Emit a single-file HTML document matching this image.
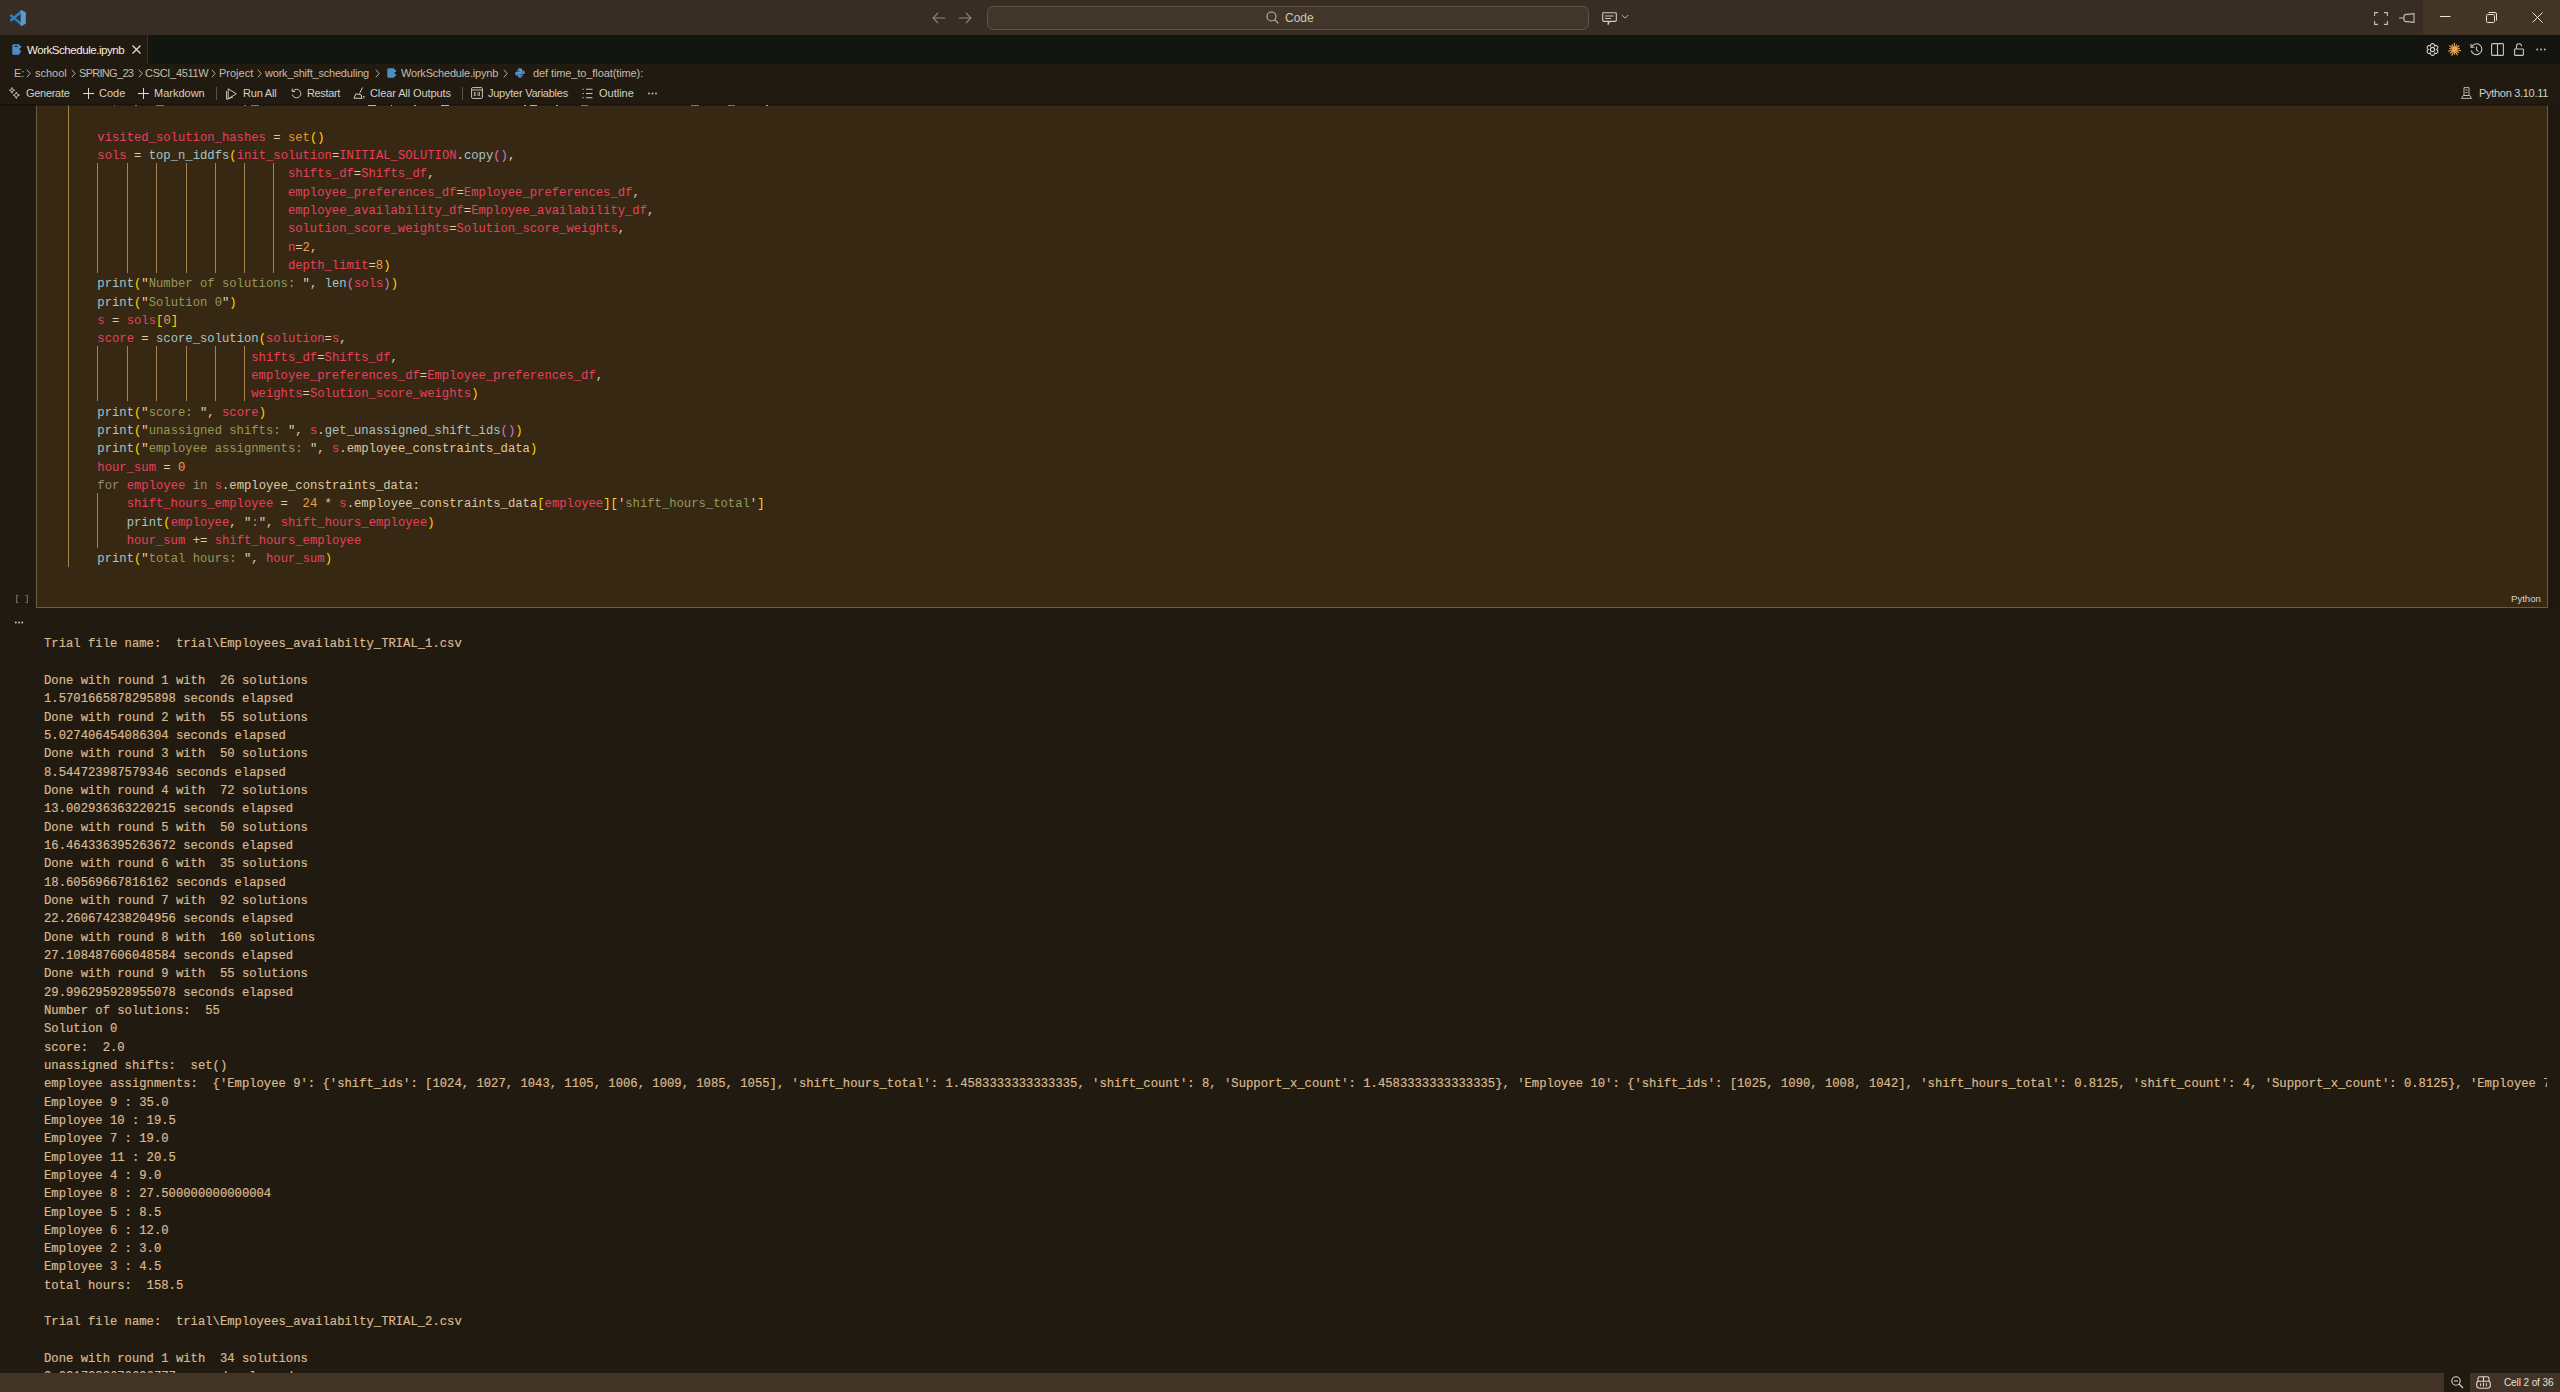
<!DOCTYPE html>
<html><head><meta charset="utf-8">
<style>
*{box-sizing:border-box}
html,body{margin:0;padding:0}
body{width:2560px;height:1392px;overflow:hidden;position:relative;background:#211a11;font-family:"Liberation Sans",sans-serif;color:#d3cab9}
.abs{position:absolute}
svg{position:absolute;overflow:visible}
#title{left:0;top:0;width:2560px;height:35px;background:#372d24}
#winctl{left:2423px;top:0;width:137px;height:35px;background:#433526}
#search{left:987px;top:6px;width:602px;height:24px;background:#413629;border:1px solid #625240;border-radius:6px}
#tabbar{left:0;top:35px;width:2560px;height:29px;background:#131510}
#tab{left:0;top:35px;width:148px;height:29px;background:#211a11;border-right:1px solid #3a2e22}
.ui{position:absolute;white-space:pre;font-size:11px;line-height:14px}
#cell{left:36px;top:104px;width:2512px;height:504px;background:#372813;border:1px solid #6b5c48;border-top:none}
#shadow{left:0;top:104px;width:2548px;height:2px;background:linear-gradient(#15100a,rgba(21,16,10,0.45))}
#scroll{left:2548px;top:104px;width:12px;height:504px;background:#1f1810}
.mono{font-family:"Liberation Mono",monospace;font-size:12.21px;line-height:18.333px;letter-spacing:0.006px}
.mono .ln{white-space:pre;height:18.333px}
#code{left:68px;top:92.17px}
#code .ln{height:18.333px}
#out{left:44px;top:617px;width:2503px;overflow:hidden;color:#d8b98e;-webkit-text-stroke:0.2px #d8b98e}
#out .ln{height:18.333px}
.guide{position:absolute;width:1px;background:#a6834e}
#status{left:0;top:1373px;width:2560px;height:19px;background:#413325}
</style></head><body>
<!-- title bar -->
<div id="title" class="abs"></div>
<div id="winctl" class="abs"></div>
<svg style="left:10px;top:10px" width="16" height="16" viewBox="0 0 16 16"><path d="M1.1 5.6 L11.8 14.6 M1.1 10.2 L11.8 1.2" stroke="#2f80c2" stroke-width="2.5" stroke-linecap="round"/><path d="M10.6 0.4 Q11.4 -0.1 12.2 0.4 L15.2 1.9 Q15.9 2.3 15.9 3 V13 Q15.9 13.7 15.2 14.1 L12.2 15.6 Q11.4 16.1 10.6 15.6 Z" fill="#5b9ac6"/></svg>
<svg style="left:932px;top:12px" width="14" height="12" viewBox="0 0 14 12"><path d="M6 1 L1 6 L6 11 M1 6 H13" stroke="#8f8575" stroke-width="1.1" fill="none"/></svg>
<svg style="left:958px;top:12px" width="14" height="12" viewBox="0 0 14 12"><path d="M8 1 L13 6 L8 11 M1 6 H13" stroke="#8f8575" stroke-width="1.1" fill="none"/></svg>
<div id="search" class="abs"></div>
<svg style="left:1266px;top:11px" width="13" height="13" viewBox="0 0 13 13"><circle cx="5.5" cy="5.5" r="4.5" stroke="#bcbcb4" stroke-width="1.1" fill="none"/><path d="M8.8 8.8 L12.3 12.3" stroke="#bcbcb4" stroke-width="1.2"/></svg>
<div class="ui" style="left:1285px;top:10px;font-size:12px;line-height:16px;color:#d0c8b8">Code</div>
<svg style="left:1602px;top:12px" width="15" height="14" viewBox="0 0 15 14"><path d="M1.5 0.8 H13.5 Q14.3 0.8 14.3 1.6 V8.6 Q14.3 9.4 13.5 9.4 H7.5 L6 12.8 L6.3 9.4 H1.5 Q0.7 9.4 0.7 8.6 V1.6 Q0.7 0.8 1.5 0.8 Z" stroke="#cfcabc" stroke-width="1.1" fill="none"/><path d="M3 4 H11.5 M3 6.5 H9" stroke="#cfcabc" stroke-width="1.1"/></svg>
<svg style="left:1621px;top:14px" width="8" height="6" viewBox="0 0 8 6"><path d="M0.8 1 L4 4.2 L7.2 1" stroke="#c0bab0" stroke-width="1" fill="none"/></svg>
<!-- layout icons -->
<svg style="left:2374px;top:12px" width="14" height="13" viewBox="0 0 14 13"><path d="M0.6 4 V0.6 H4 M10 0.6 H13.4 V4 M13.4 9 V12.4 H10 M4 12.4 H0.6 V9" stroke="#c8c0b2" stroke-width="1.1" fill="none"/></svg>
<svg style="left:2399px;top:13px" width="16" height="10" viewBox="0 0 16 10"><path d="M0 5 H5 M5 3 V7 L6 8.4 L15 9.4 V0.6 L6 1.6 Z" stroke="#c8c0b2" stroke-width="1.1" fill="none"/></svg>
<svg style="left:2440px;top:15px" width="11" height="3" viewBox="0 0 11 3"><path d="M0 1.5 H10.5" stroke="#e8e2d8" stroke-width="1"/></svg>
<svg style="left:2486px;top:12px" width="11" height="11" viewBox="0 0 11 11"><rect x="0.5" y="2.5" width="8" height="8" rx="1" stroke="#e8e2d8" stroke-width="1" fill="none"/><path d="M2.5 0.5 H9 Q10.5 0.5 10.5 2 V8.5" stroke="#e8e2d8" stroke-width="1" fill="none"/></svg>
<svg style="left:2532px;top:12px" width="11" height="11" viewBox="0 0 11 11"><path d="M0.5 0.5 L10.5 10.5 M10.5 0.5 L0.5 10.5" stroke="#e8e2d8" stroke-width="1"/></svg>

<!-- tab bar -->
<div id="tabbar" class="abs"></div>
<div id="tab" class="abs"></div>
<svg style="left:12px;top:44px" width="9" height="11" viewBox="0 0 9 11"><rect x="0.3" y="0.3" width="7.4" height="10.4" rx="1.2" fill="#4b8dc6"/><rect x="7" y="2" width="2" height="2" fill="#4b8dc6"/><rect x="7" y="6.5" width="2" height="2" fill="#4b8dc6"/><rect x="2.5" y="1.8" width="3" height="1.2" fill="#1d2a33"/></svg>
<div class="ui" style="left:27px;top:43px;font-size:11.5px;color:#f2ede4;letter-spacing:-0.45px">WorkSchedule.ipynb</div>
<svg style="left:132px;top:45px" width="9" height="9" viewBox="0 0 9 9"><path d="M0.5 0.5 L8.5 8.5 M8.5 0.5 L0.5 8.5" stroke="#eee8dc" stroke-width="1.1"/></svg>
<!-- editor actions -->
<svg style="left:2426px;top:43px" width="13" height="13" viewBox="0 0 13 13"><circle cx="6.5" cy="6.5" r="2.1" stroke="#d8d2c4" stroke-width="1.1" fill="none"/><path d="M10.60 6.50 L11.00 6.74 L11.28 7.00 L11.49 7.29 L11.66 7.60 L11.78 7.91 L11.84 8.24 L11.86 8.56 L11.83 8.87 L11.74 9.17 L11.61 9.45 L11.43 9.70 L11.22 9.93 L10.96 10.11 L10.68 10.26 L10.36 10.36 L10.03 10.42 L9.68 10.43 L9.32 10.39 L8.96 10.28 L8.55 10.05 L8.55 10.52 L8.45 10.89 L8.31 11.22 L8.13 11.52 L7.91 11.78 L7.67 12.00 L7.40 12.17 L7.11 12.30 L6.81 12.37 L6.50 12.40 L6.19 12.37 L5.89 12.30 L5.60 12.17 L5.33 12.00 L5.09 11.78 L4.87 11.52 L4.69 11.22 L4.55 10.89 L4.45 10.52 L4.45 10.05 L4.04 10.28 L3.68 10.39 L3.32 10.43 L2.97 10.42 L2.64 10.36 L2.32 10.26 L2.04 10.11 L1.78 9.93 L1.57 9.70 L1.39 9.45 L1.26 9.17 L1.17 8.87 L1.14 8.56 L1.16 8.24 L1.22 7.91 L1.34 7.60 L1.51 7.29 L1.72 7.00 L2.00 6.74 L2.40 6.50 L2.00 6.26 L1.72 6.00 L1.51 5.71 L1.34 5.40 L1.22 5.09 L1.16 4.76 L1.14 4.44 L1.17 4.13 L1.26 3.83 L1.39 3.55 L1.57 3.30 L1.78 3.07 L2.04 2.89 L2.32 2.74 L2.64 2.64 L2.97 2.58 L3.32 2.57 L3.68 2.61 L4.04 2.72 L4.45 2.95 L4.45 2.48 L4.55 2.11 L4.69 1.78 L4.87 1.48 L5.09 1.22 L5.33 1.00 L5.60 0.83 L5.89 0.70 L6.19 0.63 L6.50 0.60 L6.81 0.63 L7.11 0.70 L7.40 0.83 L7.67 1.00 L7.91 1.22 L8.13 1.48 L8.31 1.78 L8.45 2.11 L8.55 2.48 L8.55 2.95 L8.96 2.72 L9.32 2.61 L9.68 2.57 L10.03 2.58 L10.36 2.64 L10.68 2.74 L10.96 2.89 L11.22 3.07 L11.43 3.30 L11.61 3.55 L11.74 3.83 L11.83 4.13 L11.86 4.44 L11.84 4.76 L11.78 5.09 L11.66 5.40 L11.49 5.71 L11.28 6.00 L11.00 6.26 L10.60 6.50 Z" stroke="#d8d2c4" stroke-width="1.1" fill="none"/></svg>
<svg style="left:2448px;top:43px" width="13" height="13" viewBox="0 0 13 13"><path d="M6.5 6.5 L12.67 7.75 M6.5 6.5 L10.64 9.64 M6.5 6.5 L9.23 11.84 M6.5 6.5 L6.62 11.30 M6.5 6.5 L3.86 12.33 M6.5 6.5 L2.28 10.03 M6.5 6.5 L0.49 8.03 M6.5 6.5 L1.70 5.53 M6.5 6.5 L1.64 2.81 M6.5 6.5 L4.08 1.78 M6.5 6.5 L6.35 0.20 M6.5 6.5 L8.56 1.94 M6.5 6.5 L10.95 2.77 M6.5 6.5 L11.44 5.24" stroke="#e3a655" stroke-width="1.15" stroke-linecap="round"/><circle cx="6.5" cy="6.5" r="1.2" fill="#e3a655"/></svg>
<svg style="left:2470px;top:43px" width="13" height="13" viewBox="0 0 13 13"><path d="M1.5 4 A5.4 5.4 0 1 1 1.2 7.5" stroke="#cdc6b8" stroke-width="1.1" fill="none"/><path d="M1 1 V4.3 H4.3" stroke="#cdc6b8" stroke-width="1.1" fill="none"/><path d="M6.5 3.5 V6.8 L8.6 8.6" stroke="#cdc6b8" stroke-width="1.1" fill="none"/></svg>
<svg style="left:2491px;top:43px" width="13" height="13" viewBox="0 0 13 13"><rect x="0.6" y="0.6" width="11.8" height="11.8" rx="1" stroke="#cdc6b8" stroke-width="1.1" fill="none"/><path d="M6.5 0.6 V12.4" stroke="#cdc6b8" stroke-width="1.1"/></svg>
<svg style="left:2514px;top:43px" width="10" height="13" viewBox="0 0 10 13"><rect x="0.6" y="6" width="8.8" height="6.4" rx="0.6" stroke="#cdc6b8" stroke-width="1.1" fill="none"/><path d="M2.5 6 V3.2 A2.5 2.5 0 0 1 7.5 3.2" stroke="#cdc6b8" stroke-width="1.1" fill="none"/></svg>
<svg style="left:2536px;top:48px" width="10" height="3" viewBox="0 0 10 3"><circle cx="1.2" cy="1.5" r="0.9" fill="#cdc6b8"/><circle cx="5" cy="1.5" r="0.9" fill="#cdc6b8"/><circle cx="8.8" cy="1.5" r="0.9" fill="#cdc6b8"/></svg>

<!-- breadcrumbs -->
<div class="ui" style="left:14px;top:66px;color:#c6bcaa">E:</div>
<div class="ui" style="left:35px;top:66px;color:#c6bcaa">school</div>
<div class="ui" style="left:79px;top:66px;color:#c6bcaa;letter-spacing:-0.7px">SPRING_23</div>
<div class="ui" style="left:145px;top:66px;color:#c6bcaa;letter-spacing:-0.3px">CSCI_4511W</div>
<div class="ui" style="left:219px;top:66px;color:#c6bcaa">Project</div>
<div class="ui" style="left:265px;top:66px;color:#c6bcaa;letter-spacing:-0.2px">work_shift_scheduling</div>
<div class="ui" style="left:401px;top:66px;color:#c6bcaa;letter-spacing:-0.2px">WorkSchedule.ipynb</div>
<div class="ui" style="left:533px;top:66px;color:#c6bcaa;letter-spacing:-0.1px">def time_to_float(time):</div>
<svg style="left:0;top:0" width="1" height="1"></svg>
<svg style="left:26px;top:69px" width="5" height="9" viewBox="0 0 5 9"><path d="M0.8 0.8 L4.2 4.5 L0.8 8.2" stroke="#b8ae9c" stroke-width="1" fill="none"/></svg>
<svg style="left:71px;top:69px" width="5" height="9" viewBox="0 0 5 9"><path d="M0.8 0.8 L4.2 4.5 L0.8 8.2" stroke="#b8ae9c" stroke-width="1" fill="none"/></svg>
<svg style="left:138px;top:69px" width="5" height="9" viewBox="0 0 5 9"><path d="M0.8 0.8 L4.2 4.5 L0.8 8.2" stroke="#b8ae9c" stroke-width="1" fill="none"/></svg>
<svg style="left:211px;top:69px" width="5" height="9" viewBox="0 0 5 9"><path d="M0.8 0.8 L4.2 4.5 L0.8 8.2" stroke="#b8ae9c" stroke-width="1" fill="none"/></svg>
<svg style="left:257px;top:69px" width="5" height="9" viewBox="0 0 5 9"><path d="M0.8 0.8 L4.2 4.5 L0.8 8.2" stroke="#b8ae9c" stroke-width="1" fill="none"/></svg>
<svg style="left:375px;top:69px" width="5" height="9" viewBox="0 0 5 9"><path d="M0.8 0.8 L4.2 4.5 L0.8 8.2" stroke="#b8ae9c" stroke-width="1" fill="none"/></svg>
<svg style="left:503px;top:69px" width="5" height="9" viewBox="0 0 5 9"><path d="M0.8 0.8 L4.2 4.5 L0.8 8.2" stroke="#b8ae9c" stroke-width="1" fill="none"/></svg>
<svg style="left:387px;top:68px" width="9" height="10" viewBox="0 0 9 10"><rect x="0.3" y="0.3" width="7.4" height="9.4" rx="1.2" fill="#4b8dc6"/><rect x="7" y="2" width="2" height="2" fill="#4b8dc6"/><rect x="7" y="6" width="2" height="2" fill="#4b8dc6"/></svg>
<svg style="left:515px;top:68px" width="10" height="10" viewBox="0 0 10 10"><path d="M4.8 0.3 Q2.4 0.3 2.4 2 V3.2 H5.2 V3.7 H1.6 Q0.2 3.7 0.2 5.6 Q0.2 7.6 1.6 7.6 H2.4 V6.2 Q2.4 5 3.7 5 H6.2 Q7.4 5 7.4 3.8 V2 Q7.4 0.3 4.8 0.3 Z" fill="#5b9bd1"/><path d="M5.2 9.7 Q7.6 9.7 7.6 8 V6.8 H4.8 V6.3 H8.4 Q9.8 6.3 9.8 4.4 Q9.8 2.4 8.4 2.4 H7.6 V3.8 Q7.6 5 6.3 5 H3.8 Q2.6 5 2.6 6.2 V8 Q2.6 9.7 5.2 9.7 Z" fill="#4d8cc6"/><circle cx="3.6" cy="1.5" r="0.5" fill="#1e1912"/><circle cx="6.4" cy="8.5" r="0.5" fill="#1e1912"/></svg>

<!-- notebook toolbar -->
<svg style="left:9px;top:87px" width="11" height="12" viewBox="0 0 11 12"><path d="M3 0.5 L3.8 2.6 L5.8 3.3 L3.8 4 L3 6.2 L2.2 4 L0.3 3.3 L2.2 2.6 Z" stroke="#cdc6b8" stroke-width="0.9" fill="none"/><path d="M7.3 5 L8.2 7.3 L10.5 8.2 L8.2 9.1 L7.3 11.5 L6.4 9.1 L4.1 8.2 L6.4 7.3 Z" stroke="#cdc6b8" stroke-width="0.9" fill="none"/></svg>
<div class="ui" style="left:26px;top:86px;color:#d6cfc2;letter-spacing:-0.3px">Generate</div>
<svg style="left:83px;top:88px" width="11" height="11" viewBox="0 0 11 11"><path d="M5.5 0 V11 M0 5.5 H11" stroke="#e0d9cc" stroke-width="1"/></svg>
<div class="ui" style="left:99px;top:86px;color:#d6cfc2">Code</div>
<svg style="left:138px;top:88px" width="11" height="11" viewBox="0 0 11 11"><path d="M5.5 0 V11 M0 5.5 H11" stroke="#e0d9cc" stroke-width="1"/></svg>
<div class="ui" style="left:154px;top:86px;color:#d6cfc2">Markdown</div>
<div class="abs" style="left:216px;top:87px;width:1px;height:13px;background:#5c5245"></div>
<svg style="left:226px;top:88px" width="11" height="12" viewBox="0 0 11 12"><path d="M2.2 0.8 L10.3 5.8 L2.2 10.8 Z" stroke="#cdc6b8" stroke-width="1" fill="none" stroke-linejoin="round"/><path d="M0.6 3 V11.4 L7 9" stroke="#cdc6b8" stroke-width="1" fill="none"/></svg>
<div class="ui" style="left:243px;top:86px;color:#d6cfc2;letter-spacing:-0.2px">Run All</div>
<svg style="left:291px;top:88px" width="11" height="11" viewBox="0 0 11 11"><path d="M2.2 2.8 A4.3 4.3 0 1 1 1.3 6.5" stroke="#cdc6b8" stroke-width="1" fill="none"/><path d="M1.2 0.6 V3.5 H4.1" stroke="#cdc6b8" stroke-width="1" fill="none"/></svg>
<div class="ui" style="left:307px;top:86px;color:#d6cfc2;letter-spacing:-0.35px">Restart</div>
<svg style="left:353px;top:87px" width="12" height="12" viewBox="0 0 12 12"><path d="M9.5 0.5 L6.5 6.5 M1 11.3 H9.5 M1 11.3 L2.8 6.8 L8.2 7.8 L8.8 11.3" stroke="#cdc6b8" stroke-width="1" fill="none"/><path d="M10 9.5 H11.5 M10.5 11 H11.5" stroke="#cdc6b8" stroke-width="1"/></svg>
<div class="ui" style="left:370px;top:86px;color:#d6cfc2;letter-spacing:-0.1px">Clear All Outputs</div>
<div class="abs" style="left:462px;top:87px;width:1px;height:13px;background:#5c5245"></div>
<svg style="left:471px;top:87px" width="12" height="12" viewBox="0 0 12 12"><rect x="0.6" y="0.6" width="10.8" height="10.8" rx="1" stroke="#cdc6b8" stroke-width="1" fill="none"/><path d="M0.6 3 H11.4" stroke="#cdc6b8" stroke-width="1"/><path d="M3 5 L4.5 9 M4.5 5 L3 9 M7 5 V9 M8.5 5 V9" stroke="#cdc6b8" stroke-width="0.8"/></svg>
<div class="ui" style="left:488px;top:86px;color:#d6cfc2;letter-spacing:-0.25px">Jupyter Variables</div>
<svg style="left:582px;top:88px" width="11" height="11" viewBox="0 0 11 11"><path d="M0.5 1.2 H1.8 M0.5 5.5 H1.8 M0.5 9.8 H1.8 M4 1.2 H10.5 M4 5.5 H10.5 M4 9.8 H10.5" stroke="#cdc6b8" stroke-width="1.1"/></svg>
<div class="ui" style="left:599px;top:86px;color:#d6cfc2">Outline</div>
<svg style="left:648px;top:92px" width="9" height="3" viewBox="0 0 9 3"><circle cx="1" cy="1.5" r="0.9" fill="#cdc6b8"/><circle cx="4.5" cy="1.5" r="0.9" fill="#cdc6b8"/><circle cx="8" cy="1.5" r="0.9" fill="#cdc6b8"/></svg>
<svg style="left:2461px;top:87px" width="11" height="12" viewBox="0 0 11 12"><path d="M3 0.6 H8 V8.5 H3 Z M0.5 11.4 L2.2 8.5 H8.8 L10.5 11.4 Z M4.5 3 H6.5 M4.5 5.5 H6.5" stroke="#cdc6b8" stroke-width="0.9" fill="none"/></svg>
<div class="ui" style="left:2479px;top:86px;color:#d6cfc2;letter-spacing:-0.3px">Python 3.10.11</div>

<!-- cell -->
<div id="cell" class="abs"></div>
<div id="code" class="abs mono">
<div class="ln"></div>
<div class="ln"></div>
<div class="ln">    <span style="color:#e6405f">visited_solution_hashes</span> <span style="color:#e2cba6">=</span> <span style="color:#e8952e">set</span><span style="color:#ffd700">(</span><span style="color:#ffd700">)</span></div>
<div class="ln">    <span style="color:#e6405f">sols</span> <span style="color:#e2cba6">=</span> <span style="color:#a8c4c6">top_n_iddfs</span><span style="color:#ffd700">(</span><span style="color:#e6405f">init_solution</span><span style="color:#e2cba6">=</span><span style="color:#e6405f">INITIAL_SOLUTION</span><span style="color:#e2cba6">.</span><span style="color:#a8c4c6">copy</span><span style="color:#d076d8">(</span><span style="color:#d076d8">)</span><span style="color:#e2cba6">,</span></div>
<div class="ln">                              <span style="color:#e6405f">shifts_df</span><span style="color:#e2cba6">=</span><span style="color:#e6405f">Shifts_df</span><span style="color:#e2cba6">,</span></div>
<div class="ln">                              <span style="color:#e6405f">employee_preferences_df</span><span style="color:#e2cba6">=</span><span style="color:#e6405f">Employee_preferences_df</span><span style="color:#e2cba6">,</span></div>
<div class="ln">                              <span style="color:#e6405f">employee_availability_df</span><span style="color:#e2cba6">=</span><span style="color:#e6405f">Employee_availability_df</span><span style="color:#e2cba6">,</span></div>
<div class="ln">                              <span style="color:#e6405f">solution_score_weights</span><span style="color:#e2cba6">=</span><span style="color:#e6405f">Solution_score_weights</span><span style="color:#e2cba6">,</span></div>
<div class="ln">                              <span style="color:#e6405f">n</span><span style="color:#e2cba6">=</span><span style="color:#e9a050">2</span><span style="color:#e2cba6">,</span></div>
<div class="ln">                              <span style="color:#e6405f">depth_limit</span><span style="color:#e2cba6">=</span><span style="color:#e9a050">8</span><span style="color:#ffd700">)</span></div>
<div class="ln">    <span style="color:#a8c4c6">print</span><span style="color:#ffd700">(</span><span style="color:#e2d2b4">&quot;</span><span style="color:#95995c">Number of solutions: </span><span style="color:#e2d2b4">&quot;</span><span style="color:#e2cba6">,</span> <span style="color:#a8c4c6">len</span><span style="color:#d076d8">(</span><span style="color:#e6405f">sols</span><span style="color:#d076d8">)</span><span style="color:#ffd700">)</span></div>
<div class="ln">    <span style="color:#a8c4c6">print</span><span style="color:#ffd700">(</span><span style="color:#e2d2b4">&quot;</span><span style="color:#95995c">Solution 0</span><span style="color:#e2d2b4">&quot;</span><span style="color:#ffd700">)</span></div>
<div class="ln">    <span style="color:#e6405f">s</span> <span style="color:#e2cba6">=</span> <span style="color:#e6405f">sols</span><span style="color:#ffd700">[</span><span style="color:#e9a050">0</span><span style="color:#ffd700">]</span></div>
<div class="ln">    <span style="color:#e6405f">score</span> <span style="color:#e2cba6">=</span> <span style="color:#a8c4c6">score_solution</span><span style="color:#ffd700">(</span><span style="color:#e6405f">solution</span><span style="color:#e2cba6">=</span><span style="color:#e6405f">s</span><span style="color:#e2cba6">,</span></div>
<div class="ln">                         <span style="color:#e6405f">shifts_df</span><span style="color:#e2cba6">=</span><span style="color:#e6405f">Shifts_df</span><span style="color:#e2cba6">,</span></div>
<div class="ln">                         <span style="color:#e6405f">employee_preferences_df</span><span style="color:#e2cba6">=</span><span style="color:#e6405f">Employee_preferences_df</span><span style="color:#e2cba6">,</span></div>
<div class="ln">                         <span style="color:#e6405f">weights</span><span style="color:#e2cba6">=</span><span style="color:#e6405f">Solution_score_weights</span><span style="color:#ffd700">)</span></div>
<div class="ln">    <span style="color:#a8c4c6">print</span><span style="color:#ffd700">(</span><span style="color:#e2d2b4">&quot;</span><span style="color:#95995c">score: </span><span style="color:#e2d2b4">&quot;</span><span style="color:#e2cba6">,</span> <span style="color:#e6405f">score</span><span style="color:#ffd700">)</span></div>
<div class="ln">    <span style="color:#a8c4c6">print</span><span style="color:#ffd700">(</span><span style="color:#e2d2b4">&quot;</span><span style="color:#95995c">unassigned shifts: </span><span style="color:#e2d2b4">&quot;</span><span style="color:#e2cba6">,</span> <span style="color:#e6405f">s</span><span style="color:#e2cba6">.</span><span style="color:#a8c4c6">get_unassigned_shift_ids</span><span style="color:#d076d8">(</span><span style="color:#d076d8">)</span><span style="color:#ffd700">)</span></div>
<div class="ln">    <span style="color:#a8c4c6">print</span><span style="color:#ffd700">(</span><span style="color:#e2d2b4">&quot;</span><span style="color:#95995c">employee assignments: </span><span style="color:#e2d2b4">&quot;</span><span style="color:#e2cba6">,</span> <span style="color:#e6405f">s</span><span style="color:#e2cba6">.</span><span style="color:#dcc9a2">employee_constraints_data</span><span style="color:#ffd700">)</span></div>
<div class="ln">    <span style="color:#e6405f">hour_sum</span> <span style="color:#e2cba6">=</span> <span style="color:#e9a050">0</span></div>
<div class="ln">    <span style="color:#968b77">for</span> <span style="color:#e6405f">employee</span> <span style="color:#968b77">in</span> <span style="color:#e6405f">s</span><span style="color:#e2cba6">.</span><span style="color:#dcc9a2">employee_constraints_data</span><span style="color:#e2cba6">:</span></div>
<div class="ln">        <span style="color:#e6405f">shift_hours_employee</span> <span style="color:#e2cba6">=</span>  <span style="color:#e9a050">24</span> <span style="color:#e2cba6">*</span> <span style="color:#e6405f">s</span><span style="color:#e2cba6">.</span><span style="color:#dcc9a2">employee_constraints_data</span><span style="color:#ffd700">[</span><span style="color:#e6405f">employee</span><span style="color:#ffd700">]</span><span style="color:#ffd700">[</span><span style="color:#e2d2b4">&#x27;</span><span style="color:#95995c">shift_hours_total</span><span style="color:#e2d2b4">&#x27;</span><span style="color:#ffd700">]</span></div>
<div class="ln">        <span style="color:#a8c4c6">print</span><span style="color:#ffd700">(</span><span style="color:#e6405f">employee</span><span style="color:#e2cba6">,</span> <span style="color:#e2d2b4">&quot;</span><span style="color:#95995c">:</span><span style="color:#e2d2b4">&quot;</span><span style="color:#e2cba6">,</span> <span style="color:#e6405f">shift_hours_employee</span><span style="color:#ffd700">)</span></div>
<div class="ln">        <span style="color:#e6405f">hour_sum</span> <span style="color:#e2cba6">+</span><span style="color:#e2cba6">=</span> <span style="color:#e6405f">shift_hours_employee</span></div>
<div class="ln">    <span style="color:#a8c4c6">print</span><span style="color:#ffd700">(</span><span style="color:#e2d2b4">&quot;</span><span style="color:#95995c">total hours: </span><span style="color:#e2d2b4">&quot;</span><span style="color:#e2cba6">,</span> <span style="color:#e6405f">hour_sum</span><span style="color:#ffd700">)</span></div>
</div>
<!-- guides -->
<div class="guide" style="left:68px;top:104px;height:463px"></div>
<div class="guide" style="left:97px;top:162.5px;height:110px"></div>
<div class="guide" style="left:127px;top:162.5px;height:110px"></div>
<div class="guide" style="left:156px;top:162.5px;height:110px"></div>
<div class="guide" style="left:186px;top:162.5px;height:110px"></div>
<div class="guide" style="left:215px;top:162.5px;height:110px"></div>
<div class="guide" style="left:244px;top:162.5px;height:110px"></div>
<div class="guide" style="left:273px;top:162.5px;height:110px"></div>
<div class="guide" style="left:97px;top:345.8px;height:55px"></div>
<div class="guide" style="left:127px;top:345.8px;height:55px"></div>
<div class="guide" style="left:156px;top:345.8px;height:55px"></div>
<div class="guide" style="left:186px;top:345.8px;height:55px"></div>
<div class="guide" style="left:215px;top:345.8px;height:55px"></div>
<div class="guide" style="left:244px;top:345.8px;height:55px"></div>
<div class="guide" style="left:97px;top:492.5px;height:55px"></div>
<div id="shadow" class="abs"></div>
<div class="abs" style="left:114px;top:105px;width:1px;height:1px;background:#d94a5f"></div><div class="abs" style="left:135px;top:105px;width:2px;height:1px;background:#d94a5f"></div><div class="abs" style="left:156px;top:105px;width:8px;height:1px;background:#d94a5f"></div><div class="abs" style="left:244px;top:105px;width:2px;height:1px;background:#d94a5f"></div><div class="abs" style="left:251px;top:105px;width:8px;height:1px;background:#d94a5f"></div><div class="abs" style="left:368px;top:105px;width:8px;height:1px;background:#9fc0c8"></div><div class="abs" style="left:391px;top:105px;width:1px;height:1px;background:#9fc0c8"></div><div class="abs" style="left:414px;top:105px;width:2px;height:1px;background:#9fc0c8"></div><div class="abs" style="left:441px;top:105px;width:8px;height:1px;background:#9fc0c8"></div><div class="abs" style="left:524px;top:105px;width:2px;height:1px;background:#9fc0c8"></div><div class="abs" style="left:530px;top:105px;width:7px;height:1px;background:#9fc0c8"></div><div class="abs" style="left:556px;top:105px;width:2px;height:1px;background:#e0a040"></div><div class="abs" style="left:581px;top:105px;width:7px;height:1px;background:#d94a5f"></div><div class="abs" style="left:691px;top:105px;width:8px;height:1px;background:#d94a5f"></div><div class="abs" style="left:728px;top:105px;width:7px;height:1px;background:#d94a5f"></div><div class="abs" style="left:766px;top:105px;width:2px;height:1px;background:#e0a040"></div>

<div id="scroll" class="abs"></div>
<div class="ui" style="left:2511px;top:592px;font-size:9.6px;color:#d8d2c6">Python</div>
<svg style="left:15px;top:595px" width="14" height="8" viewBox="0 0 14 8"><path d="M3.6 0.5 H1.6 V7.5 H3.6 M10.4 0.5 H12.4 V7.5 H10.4" stroke="#76664f" stroke-width="1.2" fill="none"/></svg>
<svg style="left:14px;top:621px" width="10" height="3" viewBox="0 0 10 3"><circle cx="1.8" cy="1.5" r="1" fill="#c8c4b4"/><circle cx="5" cy="1.5" r="1" fill="#c8c4b4"/><circle cx="8.2" cy="1.5" r="1" fill="#c8c4b4"/></svg>

<!-- output -->
<div id="out" class="abs mono">
<div class="ln">&nbsp;</div>
<div class="ln">Trial file name:  trial\Employees_availabilty_TRIAL_1.csv</div>
<div class="ln">&nbsp;</div>
<div class="ln">Done with round 1 with  26 solutions</div>
<div class="ln">1.5701665878295898 seconds elapsed</div>
<div class="ln">Done with round 2 with  55 solutions</div>
<div class="ln">5.027406454086304 seconds elapsed</div>
<div class="ln">Done with round 3 with  50 solutions</div>
<div class="ln">8.544723987579346 seconds elapsed</div>
<div class="ln">Done with round 4 with  72 solutions</div>
<div class="ln">13.002936363220215 seconds elapsed</div>
<div class="ln">Done with round 5 with  50 solutions</div>
<div class="ln">16.464336395263672 seconds elapsed</div>
<div class="ln">Done with round 6 with  35 solutions</div>
<div class="ln">18.60569667816162 seconds elapsed</div>
<div class="ln">Done with round 7 with  92 solutions</div>
<div class="ln">22.260674238204956 seconds elapsed</div>
<div class="ln">Done with round 8 with  160 solutions</div>
<div class="ln">27.108487606048584 seconds elapsed</div>
<div class="ln">Done with round 9 with  55 solutions</div>
<div class="ln">29.996295928955078 seconds elapsed</div>
<div class="ln">Number of solutions:  55</div>
<div class="ln">Solution 0</div>
<div class="ln">score:  2.0</div>
<div class="ln">unassigned shifts:  set()</div>
<div class="ln">employee assignments:  {&#x27;Employee 9&#x27;: {&#x27;shift_ids&#x27;: [1024, 1027, 1043, 1105, 1006, 1009, 1085, 1055], &#x27;shift_hours_total&#x27;: 1.4583333333333335, &#x27;shift_count&#x27;: 8, &#x27;Support_x_count&#x27;: 1.4583333333333335}, &#x27;Employee 10&#x27;: {&#x27;shift_ids&#x27;: [1025, 1090, 1008, 1042], &#x27;shift_hours_total&#x27;: 0.8125, &#x27;shift_count&#x27;: 4, &#x27;Support_x_count&#x27;: 0.8125}, &#x27;Employee 7&#x27;: {&#x27;shift_ids&#x27;: [1021, 1034, 1038]</div>
<div class="ln">Employee 9 : 35.0</div>
<div class="ln">Employee 10 : 19.5</div>
<div class="ln">Employee 7 : 19.0</div>
<div class="ln">Employee 11 : 20.5</div>
<div class="ln">Employee 4 : 9.0</div>
<div class="ln">Employee 8 : 27.500000000000004</div>
<div class="ln">Employee 5 : 8.5</div>
<div class="ln">Employee 6 : 12.0</div>
<div class="ln">Employee 2 : 3.0</div>
<div class="ln">Employee 3 : 4.5</div>
<div class="ln">total hours:  158.5</div>
<div class="ln">&nbsp;</div>
<div class="ln">Trial file name:  trial\Employees_availabilty_TRIAL_2.csv</div>
<div class="ln">&nbsp;</div>
<div class="ln">Done with round 1 with  34 solutions</div>
<div class="ln">2.0317282676696777 seconds elapsed</div>
</div>

<!-- status bar -->
<div id="status" class="abs"></div>
<div class="abs" style="left:2444px;top:1373px;width:26px;height:19px;background:#211a11"></div>
<svg style="left:2451px;top:1376px" width="13" height="13" viewBox="0 0 13 13"><circle cx="5" cy="5" r="4.2" stroke="#ddd6ca" stroke-width="1.1" fill="none"/><path d="M3 5 H7 M8 8 L12 12" stroke="#ddd6ca" stroke-width="1.1"/></svg>
<svg style="left:2476px;top:1376px" width="15" height="13" viewBox="0 0 15 13"><path d="M3.6 0.7 H11.4 Q13 0.7 13 2.3 V5.2 H2 V2.3 Q2 0.7 3.6 0.7 Z M7.5 0.7 V5.2" stroke="#e2dcd2" stroke-width="1.1" fill="none"/><path d="M2 5.2 Q0.7 5.8 0.7 7.5 V9.8 Q0.7 12.3 4 12.3 H11 Q14.3 12.3 14.3 9.8 V7.5 Q14.3 5.8 13 5.2" stroke="#e2dcd2" stroke-width="1.1" fill="none"/><path d="M4.6 7.2 V10.2 M10.4 7.2 V10.2 M7.5 6.5 V10.5" stroke="#e2dcd2" stroke-width="1"/></svg>
<div class="ui" style="left:2504px;top:1376px;font-size:10px;color:#e6e0d4;letter-spacing:-0.1px">Cell 2 of 36</div>
</body></html>
